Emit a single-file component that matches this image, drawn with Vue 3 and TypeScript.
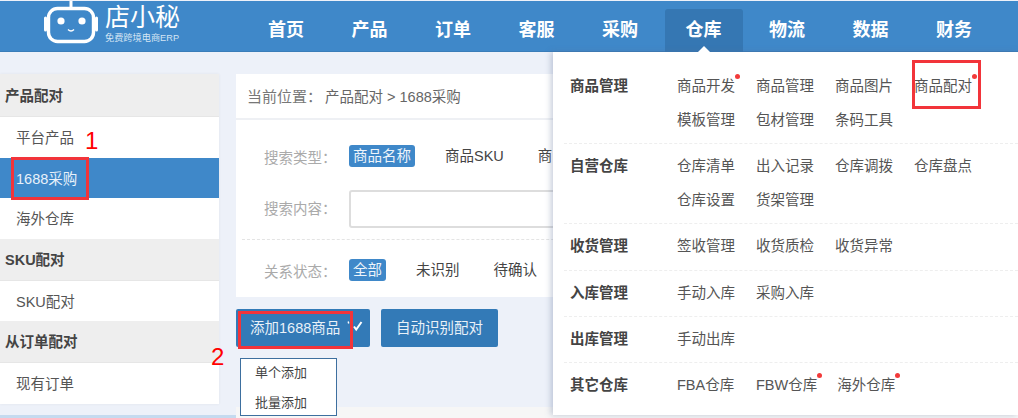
<script setup lang="ts">
interface MenuItem { name: string; dot?: boolean }
interface MenuRow { title: string; items: MenuItem[] }
const nav: string[] = ['首页', '产品', '订单', '客服', '采购', '仓库', '物流', '数据', '财务']
const side = [
  { title: '产品配对', items: ['平台产品', '1688采购', '海外仓库'] },
  { title: 'SKU配对', items: ['SKU配对'] },
  { title: '从订单配对', items: ['现有订单'] },
]
const shortItems: string[] = ['1688采购', 'SKU配对']
const menu: MenuRow[] = [
  { title: '商品管理', items: [{ name: '商品开发', dot: true }, { name: '商品管理' }, { name: '商品图片' }, { name: '商品配对', dot: true }, { name: '模板管理' }, { name: '包材管理' }, { name: '条码工具' }] },
  { title: '自营仓库', items: [{ name: '仓库清单' }, { name: '出入记录' }, { name: '仓库调拨' }, { name: '仓库盘点' }, { name: '仓库设置' }, { name: '货架管理' }] },
  { title: '收货管理', items: [{ name: '签收管理' }, { name: '收货质检' }, { name: '收货异常' }] },
  { title: '入库管理', items: [{ name: '手动入库' }, { name: '采购入库' }] },
  { title: '出库管理', items: [{ name: '手动出库' }] },
  { title: '其它仓库', items: [{ name: 'FBA仓库' }, { name: 'FBW仓库', dot: true }, { name: '海外仓库', dot: true }] },
]
</script>

<template>
  <div class="page">
    <header class="header">
      <div class="logo">
        <svg class="robot" width="56" height="44" viewBox="0 0 56 44">
          <path d="M28 0v6" stroke="#fff" stroke-width="3" fill="none" />
          <rect x="5.5" y="7.5" width="45" height="33" rx="9" fill="none" stroke="#fff" stroke-width="3.4" />
          <path d="M2.5 17v12M53.5 17v12" stroke="#fff" stroke-width="3" stroke-linecap="round" />
          <circle cx="18" cy="20" r="3.6" fill="#fff" />
          <circle cx="39" cy="20" r="3.6" fill="#fff" />
          <path d="M25 28.5q3 3 6 0" stroke="#fff" stroke-width="1.4" fill="none" />
        </svg>
        <div class="brand">
          <div class="brand-name">店小秘</div>
          <div class="brand-sub">免费跨境电商ERP</div>
        </div>
      </div>
      <nav class="nav">
        <a v-for="n in nav" :key="n" class="nav-item" :class="{ active: n === '仓库' }">{{ n }}</a>
      </nav>
    </header>

    <div class="body">
      <aside class="side">
        <template v-for="g in side" :key="g.title">
          <div class="side-title">{{ g.title }}</div>
          <div
            v-for="i in g.items"
            :key="i"
            class="side-item"
            :class="{ selected: i === '1688采购', short: shortItems.includes(i) }"
          >{{ i }}</div>
        </template>
      </aside>

      <main class="main">
        <div class="crumb"><span class="crumb-label">当前位置：</span><span>产品配对 &gt; 1688采购</span></div>
        <section class="panel">
          <div class="f-row first">
            <span class="f-label">搜索类型：</span>
            <span class="tag on">商品名称</span>
            <span class="tag">商品SKU</span>
            <span class="tag">商</span>
          </div>
          <div class="f-row second">
            <span class="f-label">搜索内容：</span>
            <div class="input"></div>
          </div>
          <div class="f-row third">
            <span class="f-label">关系状态：</span>
            <span class="tag on">全部</span>
            <span class="tag">未识别</span>
            <span class="tag">待确认</span>
          </div>
        </section>
        <div class="actions">
          <button class="btn add">
            添加1688商品
            <svg class="check" width="16" height="11" viewBox="0 0 16 11">
              <path d="M1.2 .5l.5 2" stroke="#fff" stroke-width="1.4" fill="none" />
              <path d="M7 5.5l2.2 3L14.5 1" stroke="#fff" stroke-width="2" fill="none" />
            </svg>
          </button>
          <button class="btn auto">自动识别配对</button>
        </div>
        <div class="next-panel"></div>
        <div class="popup">
          <div class="popup-item">单个添加</div>
          <div class="popup-item">批量添加</div>
        </div>
      </main>
    </div>
    <div class="strip"></div>

    <div class="menu">
      <span class="caret"></span>
      <div v-for="r in menu" :key="r.title" class="menu-row">
        <div class="menu-title">{{ r.title }}</div>
        <div class="menu-items">
          <span v-for="m in r.items" :key="m.name" class="menu-item">
            <span class="menu-text">{{ m.name }}<i v-if="m.dot" class="dot"></i></span>
          </span>
        </div>
      </div>
    </div>

    <div class="mark box-a"></div>
    <div class="mark box-b"></div>
    <div class="mark box-c"></div>
    <div class="num num-1">1</div>
    <div class="num num-2">2</div>
  </div>
</template>

<style>
html, body { margin: 0; padding: 0; }
</style>

<style scoped>
.page {
  position: relative;
  width: 1018px;
  height: 418px;
  overflow: hidden;
  display: flex;
  flex-direction: column;
  padding-top: 1px;
  box-sizing: border-box;
  background: #edf1f9;
  font-family: "Liberation Sans", "Noto Sans CJK SC", sans-serif;
  font-size: 14.5px;
  color: #555;
}
.header {
  height: 51px;
  flex: none;
  display: flex;
  background: #3f88c9;
  box-shadow: inset 0 -1px 0 #3a7db9;
  color: #fff;
}
.logo {
  width: 247px;
  flex: none;
  display: flex;
  align-items: flex-start;
  box-sizing: border-box;
  padding-left: 43px;
}
.robot { flex: none; }
.brand { margin-left: 6px; }
.brand-name {
  font-size: 25px;
  font-weight: 400;
  line-height: 27px;
  margin-top: 3px;
}
.brand-sub {
  font-size: 9.2px;
  line-height: 10px;
  margin-top: 2px;
  color: #d5e5f4;
  white-space: nowrap;
}
.nav { display: flex; gap: 5.5px; padding-top: 8px; }
.nav-item {
  width: 78px;
  height: 43px;
  line-height: 43px;
  text-align: center;
  font-size: 18px;
  font-weight: 700;
  border-radius: 3px 3px 0 0;
}
.nav-item.active { background: #3577b3; }
.body { flex: 1; min-height: 0; display: flex; padding-top: 22px; gap: 17px; }
.side {
  width: 219px;
  flex: none;
  height: 330px;
  background: #fff;
  box-shadow: 0 0 3px rgba(0, 0, 0, 0.06);
}
.side-title {
  height: 41px;
  line-height: 43px;
  padding-left: 5px;
  font-weight: 700;
  color: #444;
  background: #eee;
  border-bottom: 1px solid #e6e6e6;
}
.side-title:first-child { height: 42px; line-height: 44px; }
.side-item {
  height: 41px;
  line-height: 42px;
  padding-left: 16px;
  color: #555;
}
.side-item.short { height: 40px; }
.side-item.selected { background: #3f88c9; color: #e8f1fa; }
.main { position: relative; flex: 1; min-width: 0; }
.crumb {
  height: 44px;
  line-height: 46px;
  background: #fff;
  padding-left: 11px;
  color: #666;
  font-size: 14.5px;
  border-bottom: 2px solid #eef0f4;
}
.crumb-label { display: inline-block; width: 78px; color: #777; font-size: 15px; }
.panel { background: #fff; height: 177px; padding-left: 28px; box-sizing: border-box; }
.f-row { display: flex; align-items: center; color: #333; }
.f-row.first { height: 70px; padding-top: 2px; box-sizing: border-box; }
.f-row.second {
  height: 49px;
  align-items: flex-start;
  border-bottom: 1px dashed #e4e4e4;
  margin-left: -22px;
  padding-left: 22px;
}
.f-row.second .f-label { line-height: 38px; }
.f-row.third { height: 57px; padding-top: 3px; box-sizing: border-box; }
.f-label { width: 85px; flex: none; color: #aaa; }
.tag {
  padding: 0 4px;
  line-height: 22px;
  height: 22px;
  margin-right: 26px;
  border-radius: 3px;
  white-space: nowrap;
  color: #444;
}
.tag.on { background: #3f88c9; color: #eef5fb; }
.input { width: 400px; height: 38px; box-sizing: border-box; border: 2px solid #ddd; border-radius: 3px; background: #fff; flex: none; }
.actions { display: flex; gap: 11px; margin-top: 12px; }
.btn {
  height: 38px;
  border: 0;
  border-radius: 2px;
  background: #337ab7;
  color: #e9f1f8;
  font: inherit;
  font-size: 14.5px;
  padding: 0 0 3px;
}
.btn.add { width: 134px; padding-left: 14px; text-align: left; position: relative; }
.check { position: absolute; left: 111px; top: 12px; }
.btn.auto { width: 117px; }
.next-panel { height: 40px; margin-top: 60px; background: #f6f6f6; }
.popup {
  position: absolute;
  left: 4px;
  top: 284px;
  width: 97px;
  height: 58px;
  background: #fff;
  border: 1px solid #3d6f9f;
  box-sizing: border-box;
  padding: 0 0 0 14px;
  font-size: 13px;
  color: #444;
}
.popup-item { height: 30px; line-height: 28px; }
.strip { height: 3px; flex: none; background: #c5daef; }
.menu {
  position: absolute;
  left: 553px;
  top: 52px;
  width: 465px;
  height: 363px;
  background: #fff;
  box-shadow: -2px 0 6px rgba(90, 110, 150, 0.35);
  box-sizing: border-box;
  padding: 12px 0 0 11px;
}
.caret {
  position: absolute;
  left: 145px;
  top: -6px;
  width: 0;
  height: 0;
  border-left: 6px solid transparent;
  border-right: 6px solid transparent;
  border-bottom: 6px solid #fff;
}
.menu-row { display: flex; padding: 5px 0 6px; border-bottom: 1px dashed #eee; }
.menu-row:nth-of-type(3) { padding-bottom: 7px; }
.menu-row:last-child { border-bottom: 0; }
.menu-title { width: 113px; flex: none; padding-left: 6px; box-sizing: border-box; font-weight: 700; color: #444; line-height: 34px; }
.menu-items { display: flex; flex-wrap: wrap; width: 320px; height: fit-content; }
.menu-item { min-width: 79px; padding-right: 20px; box-sizing: border-box; line-height: 34px; height: 34px; color: #555; }
.menu-text { position: relative; display: inline-block; white-space: nowrap; }
.dot { position: absolute; right: -5px; top: 5px; width: 5px; height: 5px; border-radius: 50%; background: #f23a3a; }
.mark { position: absolute; border: 3px solid #f2343a; box-sizing: border-box; }
.box-a { left: 11px; top: 157px; width: 78px; height: 43px; }
.box-b { left: 238px; top: 311px; width: 115px; height: 38px; }
.box-c { left: 912px; top: 60px; width: 69px; height: 49px; }
.num { position: absolute; color: #f00; font-size: 24px; line-height: 24px; }
.num-1 { left: 85px; top: 129px; }
.num-2 { left: 211px; top: 345px; }
</style>
